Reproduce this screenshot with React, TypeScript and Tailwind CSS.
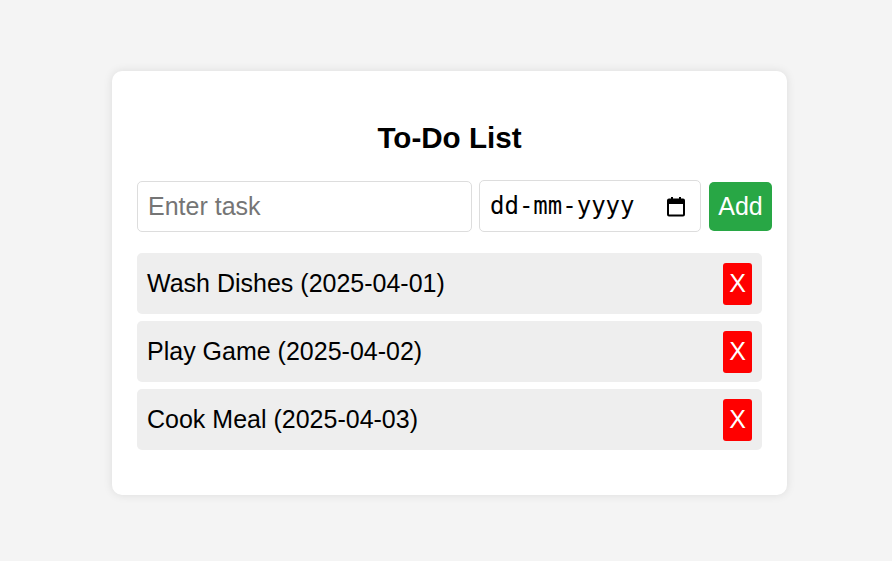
import { useState } from "react";

type Task = { id: number; text: string; date: string };

const initialTasks: Task[] = [
  { id: 1, text: "Wash Dishes", date: "2025-04-01" },
  { id: 2, text: "Play Game", date: "2025-04-02" },
  { id: 3, text: "Cook Meal", date: "2025-04-03" },
];

function CalendarIcon() {
  return (
    <svg width="20" height="21" viewBox="0 0 20 21" fill="none">
      <rect x="2" y="3.5" width="16" height="16" rx="1" stroke="#000" strokeWidth="2" />
      <rect x="2" y="3.5" width="16" height="4.5" fill="#000" />
      <rect x="5" y="1" width="2" height="4" fill="#000" />
      <rect x="13" y="1" width="2" height="4" fill="#000" />
    </svg>
  );
}

export default function App() {
  const [tasks, setTasks] = useState<Task[]>(initialTasks);
  const [text, setText] = useState("");

  const addTask = () => {
    if (!text.trim()) return;
    setTasks([...tasks, { id: Date.now(), text: text.trim(), date: "" }]);
    setText("");
  };

  return (
    <div className="min-h-[561px] bg-[#f4f4f4] pt-[71px] pl-[112px] font-['Liberation_Sans',Arial,sans-serif]">
      <div className="w-[675px] rounded-[10px] bg-white p-[25px] shadow-[0_0_10px_rgba(0,0,0,0.1)]">
        <h2 className="mt-[25px] mb-[26px] text-center text-[29.6px] leading-[33px] font-bold text-black">
          To-Do List
        </h2>

        <div className="flex items-center">
          <input
            type="text"
            value={text}
            onChange={(e) => setText(e.target.value)}
            placeholder="Enter task"
            className="h-[51px] w-[335px] flex-none rounded-[5px] border border-[#ddd] px-[10px] text-[25px] text-black outline-none placeholder:text-[#757575]"
          />
          <div className="ml-[7px] flex h-[52px] w-[222px] flex-none items-center justify-between rounded-[5px] border border-[#ddd] pl-[10px] pr-[14px]">
            <span className="font-['DejaVu_Sans_Mono',monospace] text-[24px] text-black">dd-mm-yyyy</span>
            <CalendarIcon />
          </div>
          <button
            onClick={addTask}
            className="ml-[8px] h-[49px] w-[63px] flex-none rounded-[5px] bg-[#28a745] pt-[2px] text-[25px] text-white"
          >
            Add
          </button>
        </div>

        <ul className="mt-[21px] mb-[20px] flex flex-col gap-[7px]">
          {tasks.map((t) => (
            <li
              key={t.id}
              className="flex h-[61px] items-center justify-between rounded-[5px] bg-[#eee] pl-[10px] pr-[10px]"
            >
              <span className="text-[25px] text-black">
                {t.text} ({t.date})
              </span>
              <button
                onClick={() => setTasks(tasks.filter((x) => x.id !== t.id))}
                className="h-[42px] w-[29px] rounded-[3px] bg-[#ff0000] text-[25px] text-white"
              >
                X
              </button>
            </li>
          ))}
        </ul>
      </div>
    </div>
  );
}
